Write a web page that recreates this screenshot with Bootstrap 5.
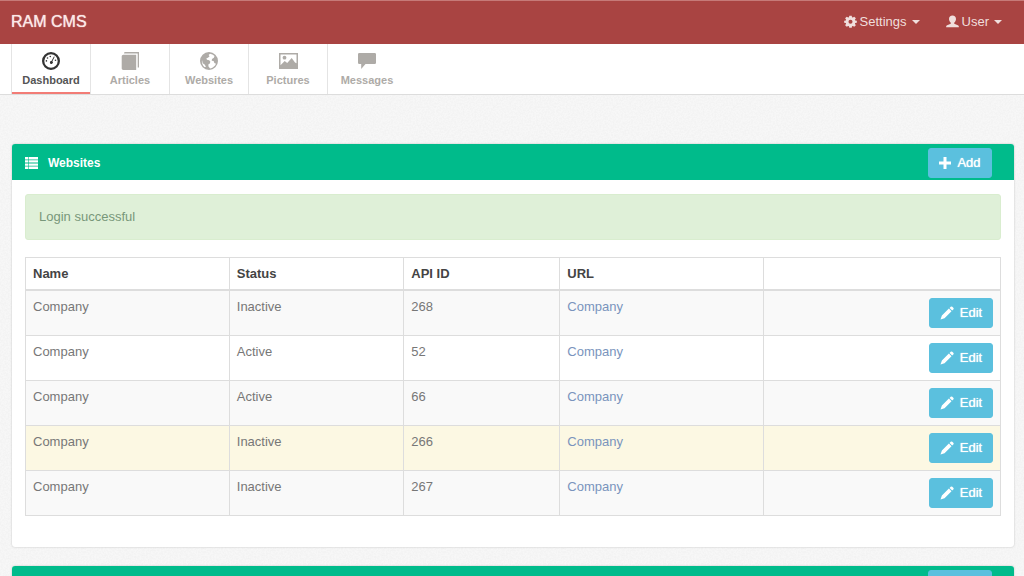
<!DOCTYPE html>
<html lang="en">
<head>
<meta charset="utf-8">
<meta name="viewport" content="width=device-width, initial-scale=1">
<title>RAM CMS</title>
<link href="https://cdn.jsdelivr.net/npm/bootstrap@5.3.0/dist/css/bootstrap.min.css" rel="stylesheet">
<style>
  body {
    font-family: "Liberation Sans", Arial, sans-serif;
    font-size: 13px;
    line-height: 18px;
    color: #777;
    background: #f7f7f7 url("data:image/svg+xml,%3Csvg xmlns='http://www.w3.org/2000/svg' width='120' height='120'%3E%3Cfilter id='n' x='0' y='0' width='1' height='1'%3E%3CfeTurbulence type='fractalNoise' baseFrequency='.6' numOctaves='2' stitchTiles='stitch'/%3E%3CfeColorMatrix values='0 0 0 0 .5 0 0 0 0 .5 0 0 0 0 .5 .2 0 0 0 -.07'/%3E%3C/filter%3E%3Crect width='120' height='120' filter='url(%23n)'/%3E%3C/svg%3E");
  }
  svg { fill: currentColor; flex: none; }
  .topbar { background: #a94442; border-top: 1px solid #c67a78; height: 44px; padding: 0 22px 2px 11px; }
  .topbar .navbar-brand { font-size: 16px; line-height: 20px; color: #fbe9e8; text-shadow: 0 0 1px #fbe9e8; padding: 0; }
  .topbar .navbar-nav .nav-link { color: #f0dfdd; padding: 0; gap: 3px; }
  .topbar .navbar-nav { gap: 26px; }
  .topbar .dropdown-toggle::after { margin-left: 2px; border-width: 4px 4px 0; }

  .tabs { background: #fff; border-bottom: 1px solid #ddd; padding-left: 11px; }
  .tabs .nav-item { flex: 0 0 79px; border-left: 1px solid #e4e4e4; }
  .tabs .nav-link { height: 50px; padding: 8px 0 0; font-size: 11px; line-height: 16px; font-weight: bold; color: #aeaba7; gap: 2px; }
  .tabs .active { color: #555; border-bottom: 2px solid #f27c76; }
  .tabs .active svg { color: #333; }

  .content { padding: 49px 10px 0 12px; }
  .panel { border: 0; border-radius: 3px; box-shadow: 0 0 2px #bbb; margin-bottom: 19px; }
  .panel .card-header { background: #00bb8b; color: #fff; border: 0; border-radius: 3px 3px 0 0; padding: 2px 22px 0 13px; height: 36px; }
  .panel h2 { font-size: 12px; line-height: 18px; font-weight: bold; gap: 10px; }
  .panel .card-body { padding: 14px 13px 31px; }
  .action { --bs-btn-color: #fff; --bs-btn-bg: #5bc0de; --bs-btn-border-color: #5bc0de; --bs-btn-hover-color: #fff; --bs-btn-hover-bg: #46b8da; --bs-btn-hover-border-color: #46b8da;
    width: 64px; height: 30px; padding: 0; font-size: 13px; line-height: 18px; border-radius: 3px; gap: 6px; text-shadow: 0 0 1px #fff; }
  .notice { background: #dff0d8; color: #78977a; border: 1px solid #d9edcf; border-radius: 3px; padding: 13px; margin-bottom: 17px; }
  .sites { --bs-table-striped-bg: #f9f9f9; --bs-table-striped-color: #777; --bs-table-color: #777; color: #777; border-color: #ddd; table-layout: fixed; }
  .sites th, .sites td { padding: 7px; height: 45px; }
  .sites th { padding-bottom: 6px; height: 32px; color: #444; border-bottom: 2px solid #ddd; }
  .sites td a { color: #7a94bd; text-decoration: none; }
  .sites .marked > td { --bs-table-bg: #fcf8e3; }
</style>
</head>
<body>
<svg class="d-none" aria-hidden="true">
  <symbol id="cog" viewBox="0 0 16 16"><path fill-rule="evenodd" d="M6.500 .8h3l.4 2 1 .4 1.700-1.200 2 2L13.400 5.700l.4 1 2 .3v2.500l-2 .4-.4 1 1.200 1.700-2 2-1.700-1.200-1 .4-.4 2h-3l-.4-2-1-.4-1.700 1.200-2-2L2.600 10.900l-.4-1-2-.4V7l2-.3.4-1L1.400 4l2-2L5.100 3.200l1-.4zM8 5.700a2.500 2.500 0 1 0 0 5 2.500 2.500 0 0 0 0-5z"/></symbol>
  <symbol id="person" viewBox="0 0 16 16"><path d="M8 .5c2.600 0 4.300 1.700 4.300 4.400 0 1.900-.9 3.500-2.100 4.400v1.100c0 .4.3.6.7.8l3.700 1.500c.8.400 1.200.9 1.200 1.500v1H.2v-1c0-.6.4-1.100 1.200-1.500l3.700-1.500c.4-.2.7-.4.7-.8V9.300C4.600 8.400 3.700 6.800 3.700 4.900 3.700 2.200 5.400.5 8 .5z"/></symbol>
  <symbol id="gauge" viewBox="0 0 18 18"><path fill-rule="evenodd" d="M9 0a9 9 0 1 1 0 18A9 9 0 0 1 9 0zm0 2.300a6.700 6.700 0 1 0 0 13.400A6.700 6.700 0 0 0 9 2.300z"/><path d="M11.900 4.400l.8.4-2.300 4.500a1.500 1.500 0 1 1-.9-.4z"/><circle cx="8.300" cy="4.500" r=".8"/><circle cx="5.500" cy="6" r=".8"/><circle cx="4.400" cy="8.900" r=".8"/><circle cx="13.500" cy="8.300" r=".8"/></symbol>
  <symbol id="book" viewBox="0 0 18 18"><path d="M3.500 0H18v15.500h-1.300V1.500H3zM2.500 2.800h12.700V18H2.500C1.200 18 .7 17.300.7 16.300V4.500c0-1 .7-1.700 1.800-1.700z"/></symbol>
  <symbol id="globe" viewBox="0 0 18 18"><path fill-rule="evenodd" d="M9 0a9 9 0 1 1 0 18A9 9 0 0 1 9 0zM10 1.700L8.600 3l1 1.300L8 5.700 6.400 6.300l.5 1.500 2.300.5 1.200 1.400-.6 1.700-1.500 1 .2 2.100 1.600 2c2.700-.4 4.900-2.300 5.900-4.700l-1.600-.7-.8-2-1.900-.4.3-1.800 1.900-1.200.6-1.700A7.300 7.300 0 0 0 10 1.700zM2 8l.7 3.300 2.200 1.500 1 2.300-1.500-.2A7.500 7.500 0 0 1 2 8z"/></symbol>
  <symbol id="picture" viewBox="0 0 19 16"><path fill-rule="evenodd" d="M0 0h19v16H0zM1.500 1.500v10.700L5.700 8l2.500 2 4.500-5L16 9.500l1.500.8V1.500z"/><circle cx="5.500" cy="4.700" r="1.900"/></symbol>
  <symbol id="comment" viewBox="0 0 18 16"><path d="M1.300 0h15.400Q18 0 18 1.300v8.400q0 1.300-1.300 1.300H7.500L3.200 16v-5H1.300Q0 11 0 9.700V1.300Q0 0 1.300 0z"/></symbol>
  <symbol id="list" viewBox="0 0 13 12"><path d="M0 0h3v2.400H0zM3.600 0H13v2.400H3.600zM0 3.200h3v2.400H0zM3.600 3.200H13v2.400H3.600zM0 6.400h3v2.400H0zM3.600 6.400H13v2.400H3.600zM0 9.600h3V12H0zM3.600 9.600H13V12H3.600z"/></symbol>
  <symbol id="plus" viewBox="0 0 12 12"><path d="M4.500 0h3v4.500H12v3H7.500V12h-3V7.500H0v-3h4.500z"/></symbol>
  <symbol id="pencil" viewBox="0 0 14 14"><path d="M10.700.8q.8-.8 1.600 0l1 1q.8.800 0 1.600l-1.100 1.100-2.600-2.600zM8.900 2.600l2.600 2.600-7 7L.5 13.500l1.400-3.900z"/></symbol>
</svg>

<header>
  <nav class="topbar navbar navbar-expand flex-nowrap justify-content-between">
    <a class="navbar-brand" href="#">RAM CMS</a>
    <ul class="navbar-nav">
      <li class="nav-item"><a class="nav-link dropdown-toggle d-flex align-items-center" href="#" role="button"><svg width="13" height="13"><use href="#cog"/></svg>Settings</a></li>
      <li class="nav-item"><a class="nav-link dropdown-toggle d-flex align-items-center" href="#" role="button"><svg width="13" height="13"><use href="#person"/></svg>User</a></li>
    </ul>
  </nav>
  <nav class="tabs">
    <ul class="nav flex-nowrap">
      <li class="nav-item"><a class="nav-link active d-flex flex-column align-items-center" href="#"><svg width="18" height="18"><use href="#gauge"/></svg>Dashboard</a></li>
      <li class="nav-item"><a class="nav-link d-flex flex-column align-items-center" href="#"><svg width="18" height="18"><use href="#book"/></svg>Articles</a></li>
      <li class="nav-item"><a class="nav-link d-flex flex-column align-items-center" href="#"><svg width="18" height="18"><use href="#globe"/></svg>Websites</a></li>
      <li class="nav-item"><a class="nav-link d-flex flex-column align-items-center" href="#"><svg width="19" height="18"><use href="#picture"/></svg>Pictures</a></li>
      <li class="nav-item"><a class="nav-link d-flex flex-column align-items-center" href="#"><svg width="18" height="18"><use href="#comment"/></svg>Messages</a></li>
    </ul>
  </nav>
</header>

<main class="content">
  <section class="panel card">
    <div class="card-header d-flex align-items-center justify-content-between">
      <h2 class="d-flex align-items-center m-0"><svg width="13" height="12"><use href="#list"/></svg>Websites</h2>
      <button type="button" class="action btn d-flex align-items-center justify-content-center"><svg width="12" height="12"><use href="#plus"/></svg>Add</button>
    </div>
    <div class="card-body">
      <div class="notice alert" role="alert">Login successful</div>
      <table class="sites table table-bordered table-striped mb-0">
        <colgroup><col style="width:20.900%"><col style="width:17.900%"><col style="width:16%"><col style="width:20.900%"><col></colgroup>
        <thead><tr><th scope="col">Name</th><th scope="col">Status</th><th scope="col">API ID</th><th scope="col">URL</th><th></th></tr></thead>
        <tbody>
          <tr><td>Company</td><td>Inactive</td><td>268</td><td><a href="#">Company</a></td><td><button type="button" class="action btn d-flex align-items-center justify-content-center ms-auto"><svg width="14" height="14"><use href="#pencil"/></svg>Edit</button></td></tr>
          <tr><td>Company</td><td>Active</td><td>52</td><td><a href="#">Company</a></td><td><button type="button" class="action btn d-flex align-items-center justify-content-center ms-auto"><svg width="14" height="14"><use href="#pencil"/></svg>Edit</button></td></tr>
          <tr><td>Company</td><td>Active</td><td>66</td><td><a href="#">Company</a></td><td><button type="button" class="action btn d-flex align-items-center justify-content-center ms-auto"><svg width="14" height="14"><use href="#pencil"/></svg>Edit</button></td></tr>
          <tr class="marked"><td>Company</td><td>Inactive</td><td>266</td><td><a href="#">Company</a></td><td><button type="button" class="action btn d-flex align-items-center justify-content-center ms-auto"><svg width="14" height="14"><use href="#pencil"/></svg>Edit</button></td></tr>
          <tr><td>Company</td><td>Inactive</td><td>267</td><td><a href="#">Company</a></td><td><button type="button" class="action btn d-flex align-items-center justify-content-center ms-auto"><svg width="14" height="14"><use href="#pencil"/></svg>Edit</button></td></tr>
        </tbody>
      </table>
    </div>
  </section>
  <section class="panel card">
    <div class="card-header d-flex align-items-center justify-content-end">
      <button type="button" class="action btn" aria-label="Add"></button>
    </div>
  </section>
</main>
<script src="https://cdn.jsdelivr.net/npm/bootstrap@5.3.0/dist/js/bootstrap.bundle.min.js"></script>
</body>
</html>
